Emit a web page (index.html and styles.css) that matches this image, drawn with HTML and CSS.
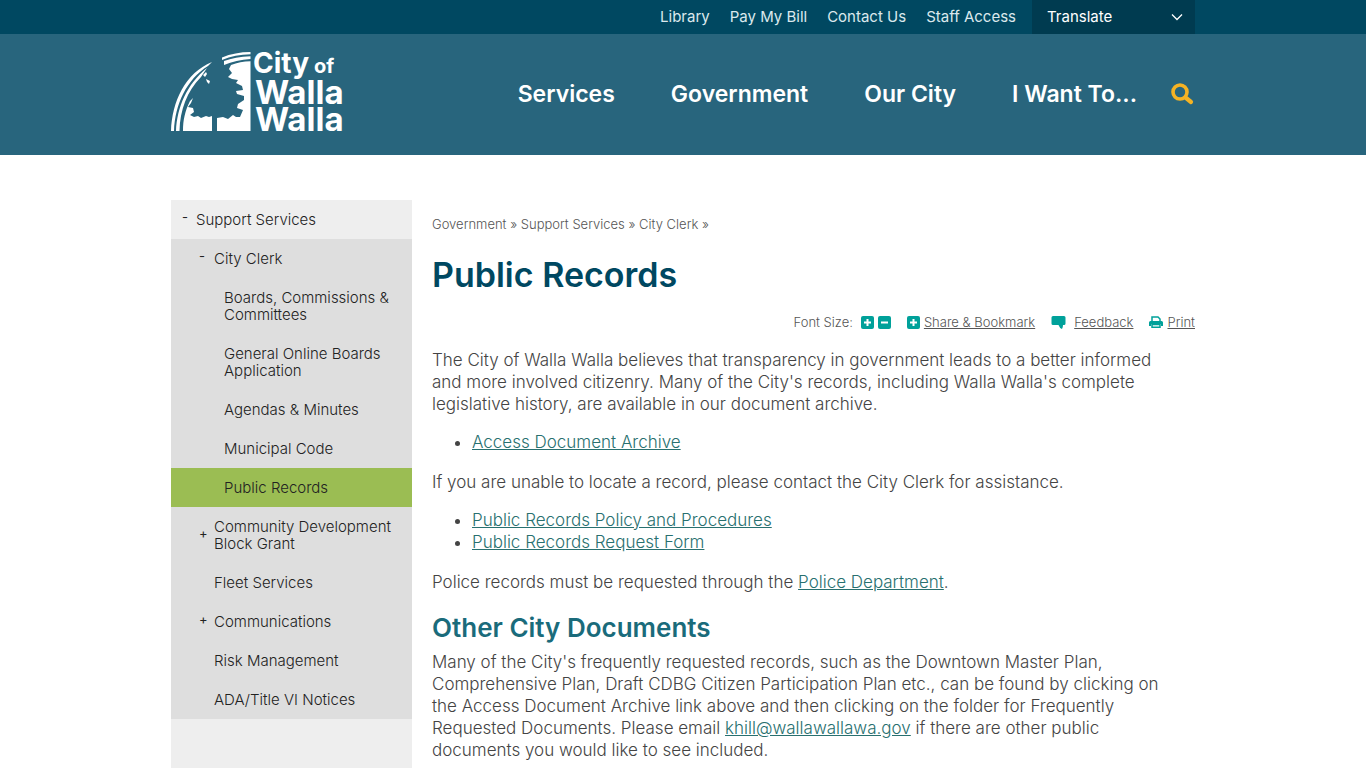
FILE: index.html
```html
<!DOCTYPE html>
<html lang="en">
<head>
    <meta charset="UTF-8">
    <meta name="viewport" content="width=device-width, initial-scale=1.0">
    <title>Public Records | City of Walla Walla</title>
    <link rel="stylesheet" href="styles.css">
</head>
<body>
    <div class="topbar">
        <div class="container topbar-inner">
            <nav class="top-links" aria-label="Quick links">
                <a href="#">Library</a>
                <a href="#">Pay My Bill</a>
                <a href="#">Contact Us</a>
                <a href="#">Staff Access</a>
            </nav>
            <div class="translate">
                <select aria-label="Translate">
                    <option>Translate</option>
                    <option>Español</option>
                </select>
                <svg class="chevron" width="12" height="8" viewBox="0 0 12 8" aria-hidden="true"><path d="M1 1.5l5 5 5-5" fill="none" stroke="#fff" stroke-width="1.3"/></svg>
            </div>
        </div>
    </div>

    <header class="header">
        <div class="container header-inner">
            <a href="#" class="logo" aria-label="City of Walla Walla">
                <svg width="180" height="84" viewBox="0 0 180 84">
                    <g fill="#fff">
                        <!-- arch, left side -->
                        <path d="M0 81C1 52 14 23 41 12L37 16C16 29 4 54 3 81z"/>
                        <path d="M5 81C6 57 16 34 36 18L30 27C16 41 9 60 8.500 81z"/>
                        <!-- arch, right side -->
                        <path d="M51 7.500Q64 2 79.500 2V4.300Q64 4.500 51 10z"/>
                        <path d="M53 11Q64 7 79.500 6.200V9Q65 10 53 15z"/>
                        <!-- ground -->
                        <path d="M12 81C12 70 14 61 19 51L22 48 20 53 17 57 22 58 23 62 19 65 23 67 27 66 30 68 35 66 38 67 41 66V81z"/>
                        <path d="M46 81V68L52 67 57 69 62 65 65 67 69 67 72 60 66 58 67 54 73 50 73 46 66 44 65 41 72 40 71 36 65 33 67 30 61 29 57 27 61 23 58 19 60 15Q69 11.500 79.500 11.300V81z"/>
                        <!-- gaps between leaves -->
                        <path d="M32 25L35 22 36 24 34 27zM35 29L39 31 38 34 36 32z"/>
                    </g>
                    <g class="logo-text">
                        <text x="82" y="23" font-size="28">City</text>
                        <text x="143" y="23" font-size="20">of</text>
                        <text x="84" y="54" font-size="33">Walla</text>
                        <text x="84" y="81" font-size="33">Walla</text>
                    </g>
                </svg>
            </a>
            <nav class="main-nav" aria-label="Main">
                <a href="#">Services</a>
                <a href="#">Government</a>
                <a href="#">Our City</a>
                <a href="#">I Want To...</a>
            </nav>
            <button type="button" class="search-btn" aria-label="Search">
                <svg width="24" height="22" viewBox="0 0 24 22"><circle cx="9" cy="9" r="7" fill="none" stroke="#f5b324" stroke-width="3.600"/><path d="M14.500 14.500l5.500 4.500" stroke="#f5b324" stroke-width="4.200" stroke-linecap="round"/></svg>
            </button>
        </div>
    </header>

    <div class="container page">
        <aside class="sidebar">
            <ul class="menu">
                <li>
                    <a href="#"><span class="toggle">-</span>Support Services</a>
                    <ul class="submenu">
                        <li>
                            <a href="#"><span class="toggle">-</span>City Clerk</a>
                            <ul class="submenu-2">
                                <li><a href="#">Boards, Commissions &amp; Committees</a></li>
                                <li><a href="#">General Online Boards Application</a></li>
                                <li><a href="#">Agendas &amp; Minutes</a></li>
                                <li><a href="#">Municipal Code</a></li>
                                <li><a href="#" class="active">Public Records</a></li>
                            </ul>
                        </li>
                        <li><a href="#"><span class="toggle">+</span>Community Development Block Grant</a></li>
                        <li><a href="#">Fleet Services</a></li>
                        <li><a href="#"><span class="toggle">+</span>Communications</a></li>
                        <li><a href="#">Risk Management</a></li>
                        <li><a href="#">ADA/Title VI Notices</a></li>
                    </ul>
                </li>
            </ul>
        </aside>

        <main class="content">
            <div class="breadcrumbs">
                <a href="#">Government</a> » <a href="#">Support Services</a> » <a href="#">City Clerk</a> »
            </div>
            <h1>Public Records</h1>

            <div class="tools">
                <div class="font-size">
                    <span>Font Size:</span>
                    <button type="button" aria-label="Increase font size">
                        <svg width="13" height="13" viewBox="0 0 13 13"><rect width="13" height="13" rx="2" fill="#00a19a"/><path d="M3 6.500h7M6.500 3v7" stroke="#fff" stroke-width="2"/></svg>
                    </button>
                    <button type="button" aria-label="Decrease font size">
                        <svg width="13" height="13" viewBox="0 0 13 13"><rect width="13" height="13" rx="2" fill="#00a19a"/><path d="M3 6.500h7" stroke="#fff" stroke-width="2"/></svg>
                    </button>
                </div>
                <a href="#" class="tool">
                    <svg width="13" height="13" viewBox="0 0 13 13"><rect width="13" height="13" rx="2" fill="#00a19a"/><path d="M3 6.500h7M6.500 3v7" stroke="#fff" stroke-width="2"/></svg>
                    <span>Share &amp; Bookmark</span>
                </a>
                <a href="#" class="tool feedback">
                    <svg width="15" height="13" viewBox="0 0 15 13"><path d="M2 0h11q1.500 0 1.500 1.500v6q0 1.500-1.500 1.500h-1q0 2.500-1 4Q8.500 12 7.500 9H2Q.5 9 .5 7.500v-6Q.5 0 2 0z" fill="#00a19a"/></svg>
                    <span>Feedback</span>
                </a>
                <a href="#" class="tool">
                    <svg width="14" height="12" viewBox="0 0 14 12"><path d="M3 5V1h6l2 2v2" fill="none" stroke="#00a19a" stroke-width="1.500"/><path d="M1.500 5h11Q14 5 14 6.500V10h-2V8H2v2H0V6.500Q0 5 1.500 5z" fill="#00a19a"/><path d="M3 8.500h8v2.700H3z" fill="none" stroke="#00a19a" stroke-width="1.500"/></svg>
                    <span>Print</span>
                </a>
            </div>

            <div class="text">
                <p>The City of Walla Walla believes that transparency in government leads to a better informed and more involved citizenry. Many of the City's records, including Walla Walla's complete legislative history, are available in our document archive.</p>
                <ul>
                    <li><a href="#">Access Document Archive</a></li>
                </ul>
                <p>If you are unable to locate a record, please contact the City Clerk for assistance.</p>
                <ul>
                    <li><a href="#">Public Records Policy and Procedures</a></li>
                    <li><a href="#">Public Records Request Form</a></li>
                </ul>
                <p>Police records must be requested through the <a href="#">Police Department</a>.</p>

                <h2>Other City Documents</h2>
                <p>Many of the City's frequently requested records, such as the Downtown Master Plan, Comprehensive Plan, Draft CDBG Citizen Participation Plan etc., can be found by clicking on the Access Document Archive link above and then clicking on the folder for Frequently Requested Documents. Please email <a href="#">khill@wallawallawa.gov</a> if there are other public documents you would like to see included.</p>
            </div>
        </main>
    </div>
</body>
</html>
```

FILE: styles.css
```css
* {
    box-sizing: border-box;
}
html {
    height: 100%;
    overflow: hidden;
}
body {
    display: flex;
    flex-direction: column;
    min-height: 100%;
    margin: 0;
    background: #fff;
    color: #444;
    font-family: Inter, "Open Sans", sans-serif;
    font-size: 17px;
    font-weight: 300;
    line-height: 22px;
}
button {
    padding: 0;
    border: none;
    background: none;
    cursor: pointer;
}
svg {
    display: block;
}
.container {
    width: 100%;
    max-width: 1024px;
    margin: 0 auto;
}

/* top bar */
.topbar {
    background: #004861;
}
.topbar-inner {
    display: flex;
    justify-content: flex-end;
}
.top-links {
    display: flex;
    align-items: center;
    gap: 20px;
    margin-right: 16px;
    font-size: 15px;
    font-weight: 400;
}
.top-links a {
    color: #dbe8ed;
    text-decoration: none;
}
.translate {
    position: relative;
}
.translate select {
    display: block;
    width: 163px;
    height: 34px;
    padding: 0 15px 2px;
    border: none;
    background: #003b50;
    color: #fff;
    font-family: inherit;
    font-size: 15px;
    appearance: none;
}
.chevron {
    position: absolute;
    top: 13px;
    right: 12px;
    pointer-events: none;
}

/* header */
.header {
    background: #28657d;
}
.header-inner {
    display: flex;
    align-items: center;
    padding: 16px 0 21px;
}
.logo svg {
    overflow: visible;
}
.logo-text {
    fill: #fff;
    font-weight: 700;
}
.main-nav {
    display: flex;
    gap: 56px;
    margin-left: auto;
    padding-top: 4px;
    font-size: 23px;
    font-weight: 600;
}
.main-nav a {
    color: #fff;
    text-decoration: none;
}
.search-btn {
    margin-left: 34px;
    padding-top: 4px;
}

/* sidebar */
.page {
    display: flex;
    flex: 1;
    gap: 20px;
    padding-top: 45px;
}
.sidebar {
    flex: 0 0 241px;
    background: #eee;
    font-size: 15px;
    line-height: 17px;
}
.sidebar ul {
    margin: 0;
    padding: 0;
    list-style: none;
}
.sidebar a {
    display: block;
    position: relative;
    padding: 11px 10px 11px 25px;
    color: #222;
    text-decoration: none;
}
.sidebar .submenu {
    background: #dedede;
}
.sidebar .submenu a {
    padding-left: 43px;
}
.sidebar .submenu-2 a {
    padding-left: 53px;
}
.sidebar .active {
    background: #9bbd53;
}
.toggle {
    display: flex;
    align-items: center;
    position: absolute;
    top: 0;
    bottom: 4px;
    left: 11px;
    font-size: 13px;
    font-weight: 400;
}
.submenu .toggle {
    left: 28px;
}

/* content */
.content {
    flex: 1;
    padding-top: 13px;
}
.content a {
    color: #28706f;
}
.content .breadcrumbs {
    color: #555;
    font-size: 13px;
}
.content .breadcrumbs a {
    color: #555;
    text-decoration: none;
}
h1 {
    margin: 20px 0 17px;
    color: #004861;
    font-size: 34px;
    font-weight: 600;
    line-height: 40px;
}
h2 {
    margin: 20px 0 8px;
    color: #1a6b7b;
    font-size: 26px;
    font-weight: 600;
    line-height: 30px;
}
.tools {
    display: flex;
    justify-content: flex-end;
    align-items: center;
    gap: 16px;
    margin-bottom: 17px;
    color: #555;
    font-size: 13px;
    line-height: 20px;
}
.font-size {
    display: flex;
    align-items: center;
    gap: 4px;
}
.font-size span {
    margin-right: 4px;
}
.tools .tool {
    display: flex;
    align-items: center;
    gap: 4px;
    color: #555;
    text-decoration: none;
}
.tool span {
    text-decoration: underline;
}
.tools .feedback {
    gap: 8px;
}
.text {
    padding-right: 20px;
}
.text p {
    margin: 0 0 16px;
}
.text ul {
    margin: 0 0 18px;
    padding-left: 40px;
}
```
